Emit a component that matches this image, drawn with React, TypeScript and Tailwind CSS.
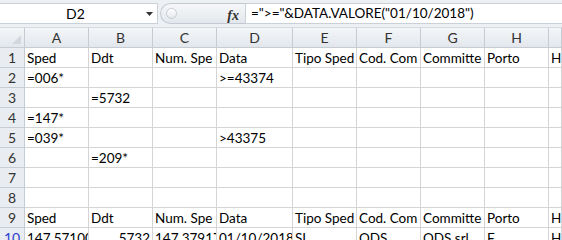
const COLS = ["A", "B", "C", "D", "E", "F", "G", "H", ""]

type Cell = { text: string; right?: boolean }

const ROWS: Cell[][] = [
  [{ text: "Sped" }, { text: "Ddt" }, { text: "Num. Spe" }, { text: "Data" }, { text: "Tipo Sped" }, { text: "Cod. Com" }, { text: "Committe" }, { text: "Porto" }, { text: "HU" }],
  [{ text: "=006*" }, { text: "" }, { text: "" }, { text: ">=43374" }],
  [{ text: "" }, { text: "=5732" }],
  [{ text: "=147*" }],
  [{ text: "=039*" }, { text: "" }, { text: "" }, { text: ">43375" }],
  [{ text: "" }, { text: "=209*" }],
  [],
  [],
  [{ text: "Sped" }, { text: "Ddt" }, { text: "Num. Spe" }, { text: "Data" }, { text: "Tipo Sped" }, { text: "Cod. Com" }, { text: "Committe" }, { text: "Porto" }, { text: "HU" }],
  [{ text: "147.57100" }, { text: "5732", right: true }, { text: "147.37917" }, { text: "01/10/2018" }, { text: "SI" }, { text: "ODS" }, { text: "ODS srl" }, { text: "F" }, { text: "HU" }],
]

export default function App() {
  return (
    <div className="w-[562px] h-[240px] overflow-hidden bg-white text-black" style={{ fontFamily: "Lato, 'Open Sans', sans-serif" }}>
      {/* formula bar */}
      <div className="h-[28px] bg-[#eef1f4] border-b border-[#d5dae0] flex items-start pt-[3px]">
        <div className="w-[158px] h-[21px] bg-white border border-l-0 border-[#c9d0d8] flex items-center relative">
          <span className="flex-1 text-center text-[14px] leading-none pr-[6px]">D2</span>
          <svg className="absolute right-[4px] top-[8px]" width="7" height="4" viewBox="0 0 7 4">
            <path d="M0 0h7L3.5 4z" fill="#333" />
          </svg>
        </div>
        <div className="w-[85px] h-[21px] ml-[2px] rounded-l-full border border-r-0 border-[#c3cad3] bg-gradient-to-b from-[#f6f7f9] to-[#e3e7ec] flex items-center relative">
          <div className="ml-[5px] w-[11px] h-[11px] rounded-full border border-[#c9ced5] bg-gradient-to-b from-white to-[#e5e8ec]" />
          <span className="absolute right-[6px] top-[1px] italic font-bold text-[14px] text-[#333]" style={{ fontFamily: "'Liberation Serif', serif" }}>fx</span>
        </div>
        <div className="flex-1 h-[21px] bg-white border border-r-0 border-[#c9d0d8] flex items-center pl-[5px] text-[13.5px] whitespace-nowrap">
          =&quot;&gt;=&quot;&amp;DATA.VALORE(&quot;01/10/2018&quot;)
        </div>
      </div>

      {/* sheet */}
      <div className="grid grid-cols-[25px_64px_64px_64px_76px_64px_64px_64px_64px_1fr] auto-rows-[20px] text-[13.5px] leading-none">
        <div className="bg-gradient-to-b from-[#f4f6f8] to-[#e3e7ec] border-r border-b border-[#c6ccd4] relative">
          <svg className="absolute right-[3px] bottom-[3px]" width="9" height="9" viewBox="0 0 9 9">
            <path d="M9 0v9H0z" fill="#d3d7dd" />
          </svg>
        </div>
        {COLS.map((c, i) => (
          <div key={i} className="bg-gradient-to-b from-[#f4f6f8] to-[#e3e7ec] border-r border-b border-[#c6ccd4] flex items-center justify-center text-[#333] text-[14px]">
            {c}
          </div>
        ))}

        {ROWS.map((row, r) => (
          <Row key={r} n={r + 1} cells={row} />
        ))}
      </div>
    </div>
  )
}

function Row({ n, cells }: { n: number; cells: Cell[] }) {
  const all = Array.from({ length: 9 }, (_, i) => cells[i] ?? { text: "" })
  return (
    <>
      <div className={`bg-[#e9ecf0] border-r border-b border-[#c6ccd4] flex items-center justify-center pt-[1px] text-[14px] ${n === 10 ? "text-[#2b3fd1]" : "text-[#333]"}`}>
        {n}
      </div>
      {all.map((c, i) => (
        <div
          key={i}
          className={`border-r border-b border-[#d4d4d4] flex items-center overflow-hidden whitespace-nowrap px-[2px] pt-[2px] ${c.right ? "justify-end" : ""}`}
        >
          {c.text}
        </div>
      ))}
    </>
  )
}
